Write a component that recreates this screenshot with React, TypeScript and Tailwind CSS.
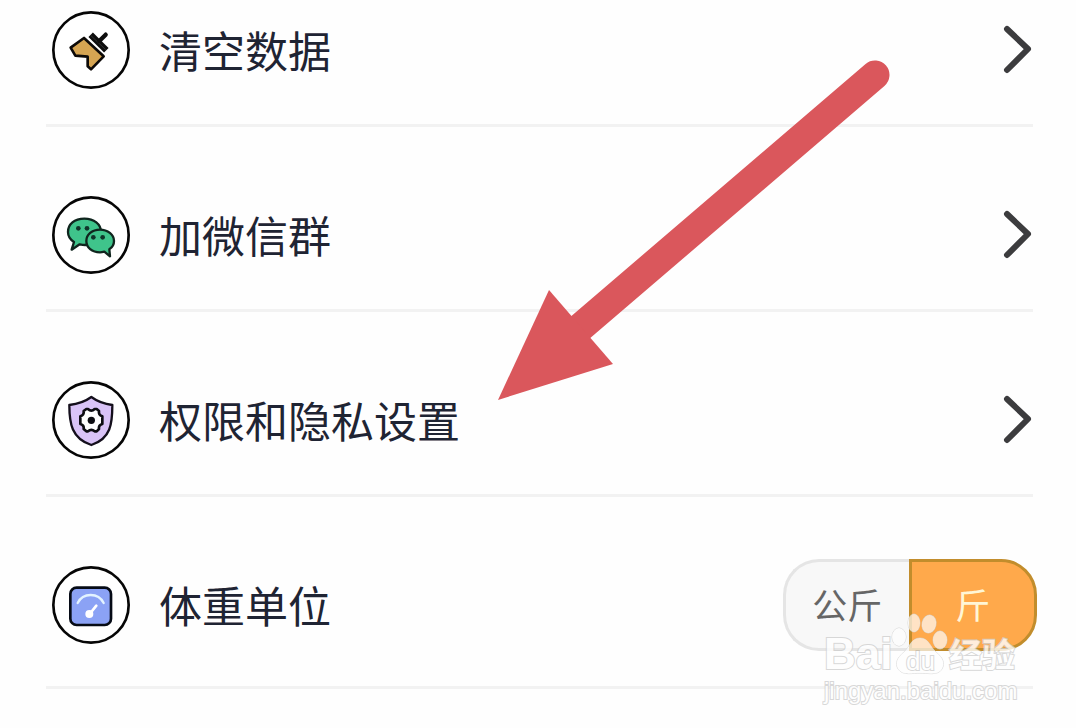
import { useState, type ReactNode } from "react";
import clsx from "clsx";

function RoundIcon({ children }: { children: ReactNode }) {
  return (
    <svg viewBox="21 18 234 234" className="size-[78px] shrink-0" fill="none" aria-hidden="true">
      <circle cx="138" cy="135" r="113" fill="#fff" stroke="#060606" strokeWidth="8" />
      {children}
    </svg>
  );
}

function BrushIcon() {
  return (
    <RoundIcon>
      <path
        d="M117 99 77 128 91 152 128 155V184L138 193 176 154Z"
        fill="#d6a552"
        stroke="#0d0a08"
        strokeWidth="8"
        strokeLinejoin="round"
      />
      <path d="M137 89 184 136" stroke="#0d0d0d" strokeWidth="19" />
      <path d="M138 92 182 134" stroke="#444" strokeWidth="2" />
      <path d="M163 108 182 89" stroke="#0d0d0d" strokeWidth="13" strokeLinecap="round" />
    </RoundIcon>
  );
}

function WechatIcon() {
  return (
    <RoundIcon>
      <path
        d="M118 86C88 86 69 103 69 126C69 139 76 149 87 156L80 179 104 163C109 164 114 165 120 165C149 165 168 148 168 126C168 103 147 86 118 86Z"
        fill="#3fc48b"
        stroke="#10251e"
        strokeWidth="7"
        strokeLinejoin="round"
      />
      <path
        d="M165 119C141 119 124 134 124 153C124 173 141 187 165 187C169 187 174 186 178 185L195 199 193 178C202 172 207 163 207 153C207 134 188 119 165 119Z"
        fill="#3fc48b"
        stroke="#10251e"
        strokeWidth="7"
        strokeLinejoin="round"
      />
      <g fill="#10352a">
        <circle cx="100" cy="115" r="7" />
        <circle cx="126" cy="115" r="7" />
        <circle cx="145" cy="142" r="7" />
        <circle cx="173" cy="142" r="7" />
      </g>
    </RoundIcon>
  );
}

function ShieldIcon() {
  return (
    <RoundIcon>
      <path
        d="M139 66C120 80 98 87 73 90C73 145 80 191 139 210C198 191 202 145 202 90C178 87 158 80 139 66Z"
        fill="#d9c3f7"
        stroke="#140f1c"
        strokeWidth="7"
        strokeLinejoin="round"
      />
      <path
        d="M124 102H129Q139 112 149 102H155L162 108Q160 120 172 124V147Q160 150 162 162L155 169H149Q139 160 129 169H124L116 162Q118 150 106 147V124Q118 120 116 108Z"
        fill="#fff"
        stroke="#0d0d12"
        strokeWidth="8"
        strokeLinejoin="round"
      />
      <circle cx="139" cy="136" r="11" fill="#0d0d12" />
    </RoundIcon>
  );
}

function ScaleIcon() {
  return (
    <RoundIcon>
      <rect x="76" y="83" width="122" height="112" rx="19" fill="#8ba2f5" stroke="#060b16" strokeWidth="8" />
      <path d="M98 129C114 97 160 97 176 129" stroke="#e3f3ff" strokeWidth="7" strokeLinecap="round" />
      <path d="M134 162 154 137" stroke="#fff" strokeWidth="8" strokeLinecap="round" />
      <circle cx="133" cy="162" r="12" fill="#fff" />
    </RoundIcon>
  );
}

const rows = [
  { label: "清空数据", icon: <BrushIcon /> },
  { label: "加微信群", icon: <WechatIcon /> },
  { label: "权限和隐私设置", icon: <ShieldIcon /> },
];

const units = ["公斤", "斤"];

function Chevron() {
  return (
    <svg viewBox="0 0 30 50" className="h-[50px] w-[30px] shrink-0" fill="none" aria-hidden="true">
      <path d="M4 4 25 24 4 45" stroke="#3c3c3e" strokeWidth="6" strokeLinecap="round" strokeLinejoin="round" />
    </svg>
  );
}

function UnitSwitch() {
  const [unit, setUnit] = useState("斤");
  return (
    <div role="group" aria-label="体重单位" className="-mr-1 flex h-[92px] w-[254px] shrink-0">
      {units.map((u) => (
        <button
          key={u}
          type="button"
          aria-pressed={unit === u}
          onClick={() => setUnit(u)}
          className={clsx(
            "flex flex-1 items-center justify-center border-[3px] pb-1 text-[35px] leading-none first:rounded-l-[36px] first:border-r-0 last:rounded-r-[36px]",
            unit === u ? "border-[#c28d2c] bg-[#ffa94b] text-[#fff6d6]" : "border-[#e5e5e5] bg-[#f8f8f8] text-[#666]"
          )}
        >
          {u}
        </button>
      ))}
    </div>
  );
}

function PointerArrow() {
  return (
    <svg viewBox="498 60 392 340" className="pointer-events-none absolute top-[60px] left-[498px] w-[392px]" aria-hidden="true">
      <path d="M575 332 875 75" stroke="#da575c" strokeWidth="29" strokeLinecap="round" />
      <path d="M498 400 549 290 613 364Z" fill="#da575c" />
    </svg>
  );
}

function Watermark() {
  return (
    <div className="pointer-events-none absolute top-[612px] left-[824px] font-['Liberation_Sans','Noto_Sans_CJK_SC',sans-serif] text-white opacity-80 [paint-order:stroke_fill] [-webkit-text-stroke:2px_#cfcfcf]">
      <div className="flex h-[66px] items-end">
        <span className="w-[67px] text-[44px] leading-[48px] font-bold">Bai</span>
        <div className="relative h-[66px] w-[58px]">
          <svg viewBox="0 0 58 66" className="size-full" fill="#fff" fillOpacity="0.85" stroke="#d2d2d2" aria-hidden="true">
            <ellipse cx="8" cy="25" rx="7" ry="9" />
            <ellipse cx="23" cy="11" rx="6" ry="9" />
            <ellipse cx="38" cy="12" rx="7" ry="9" transform="rotate(12 38 12)" />
            <ellipse cx="49" cy="28" rx="7" ry="9" />
            <path d="M29 26C38 26 39 35 45 40C52 46 54 51 51 57C47 64 36 61 29 61C22 61 12 64 7 57C4 51 6 46 13 40C19 35 20 26 29 26Z" />
          </svg>
          <span className="absolute bottom-0 left-[15px] text-[26px] leading-[34px]">du</span>
        </div>
        <span className="text-[33px] leading-[44px] font-bold">经验</span>
      </div>
      <div className="text-[24px] leading-[26px]">jingyan.baidu.com</div>
    </div>
  );
}

export default function App() {
  return (
    <main className="relative min-h-screen overflow-hidden bg-[#fefefe] pr-[43px] pl-[46px] font-['Noto_Sans_CJK_SC',sans-serif] text-[#1f2433]">
      <ul>
        {rows.map((row) => (
          <li key={row.label} className="border-b-[3px] border-[#f2f2f2] pt-[62px] pb-7 first:pt-1">
            <button type="button" className="flex h-[92px] w-full items-center gap-[29px] pl-[6px] text-left">
              {row.icon}
              <span className="flex-1 pb-[2px] text-[43px] leading-[60px]">{row.label}</span>
              <Chevron />
            </button>
          </li>
        ))}
        <li className="flex items-center gap-[29px] border-b-[3px] border-[#f2f2f2] pt-[62px] pb-[35px] pl-[6px]">
          <ScaleIcon />
          <span className="flex-1 pb-[2px] text-[43px] leading-[60px]">体重单位</span>
          <UnitSwitch />
        </li>
      </ul>
      <PointerArrow />
      <Watermark />
    </main>
  );
}
